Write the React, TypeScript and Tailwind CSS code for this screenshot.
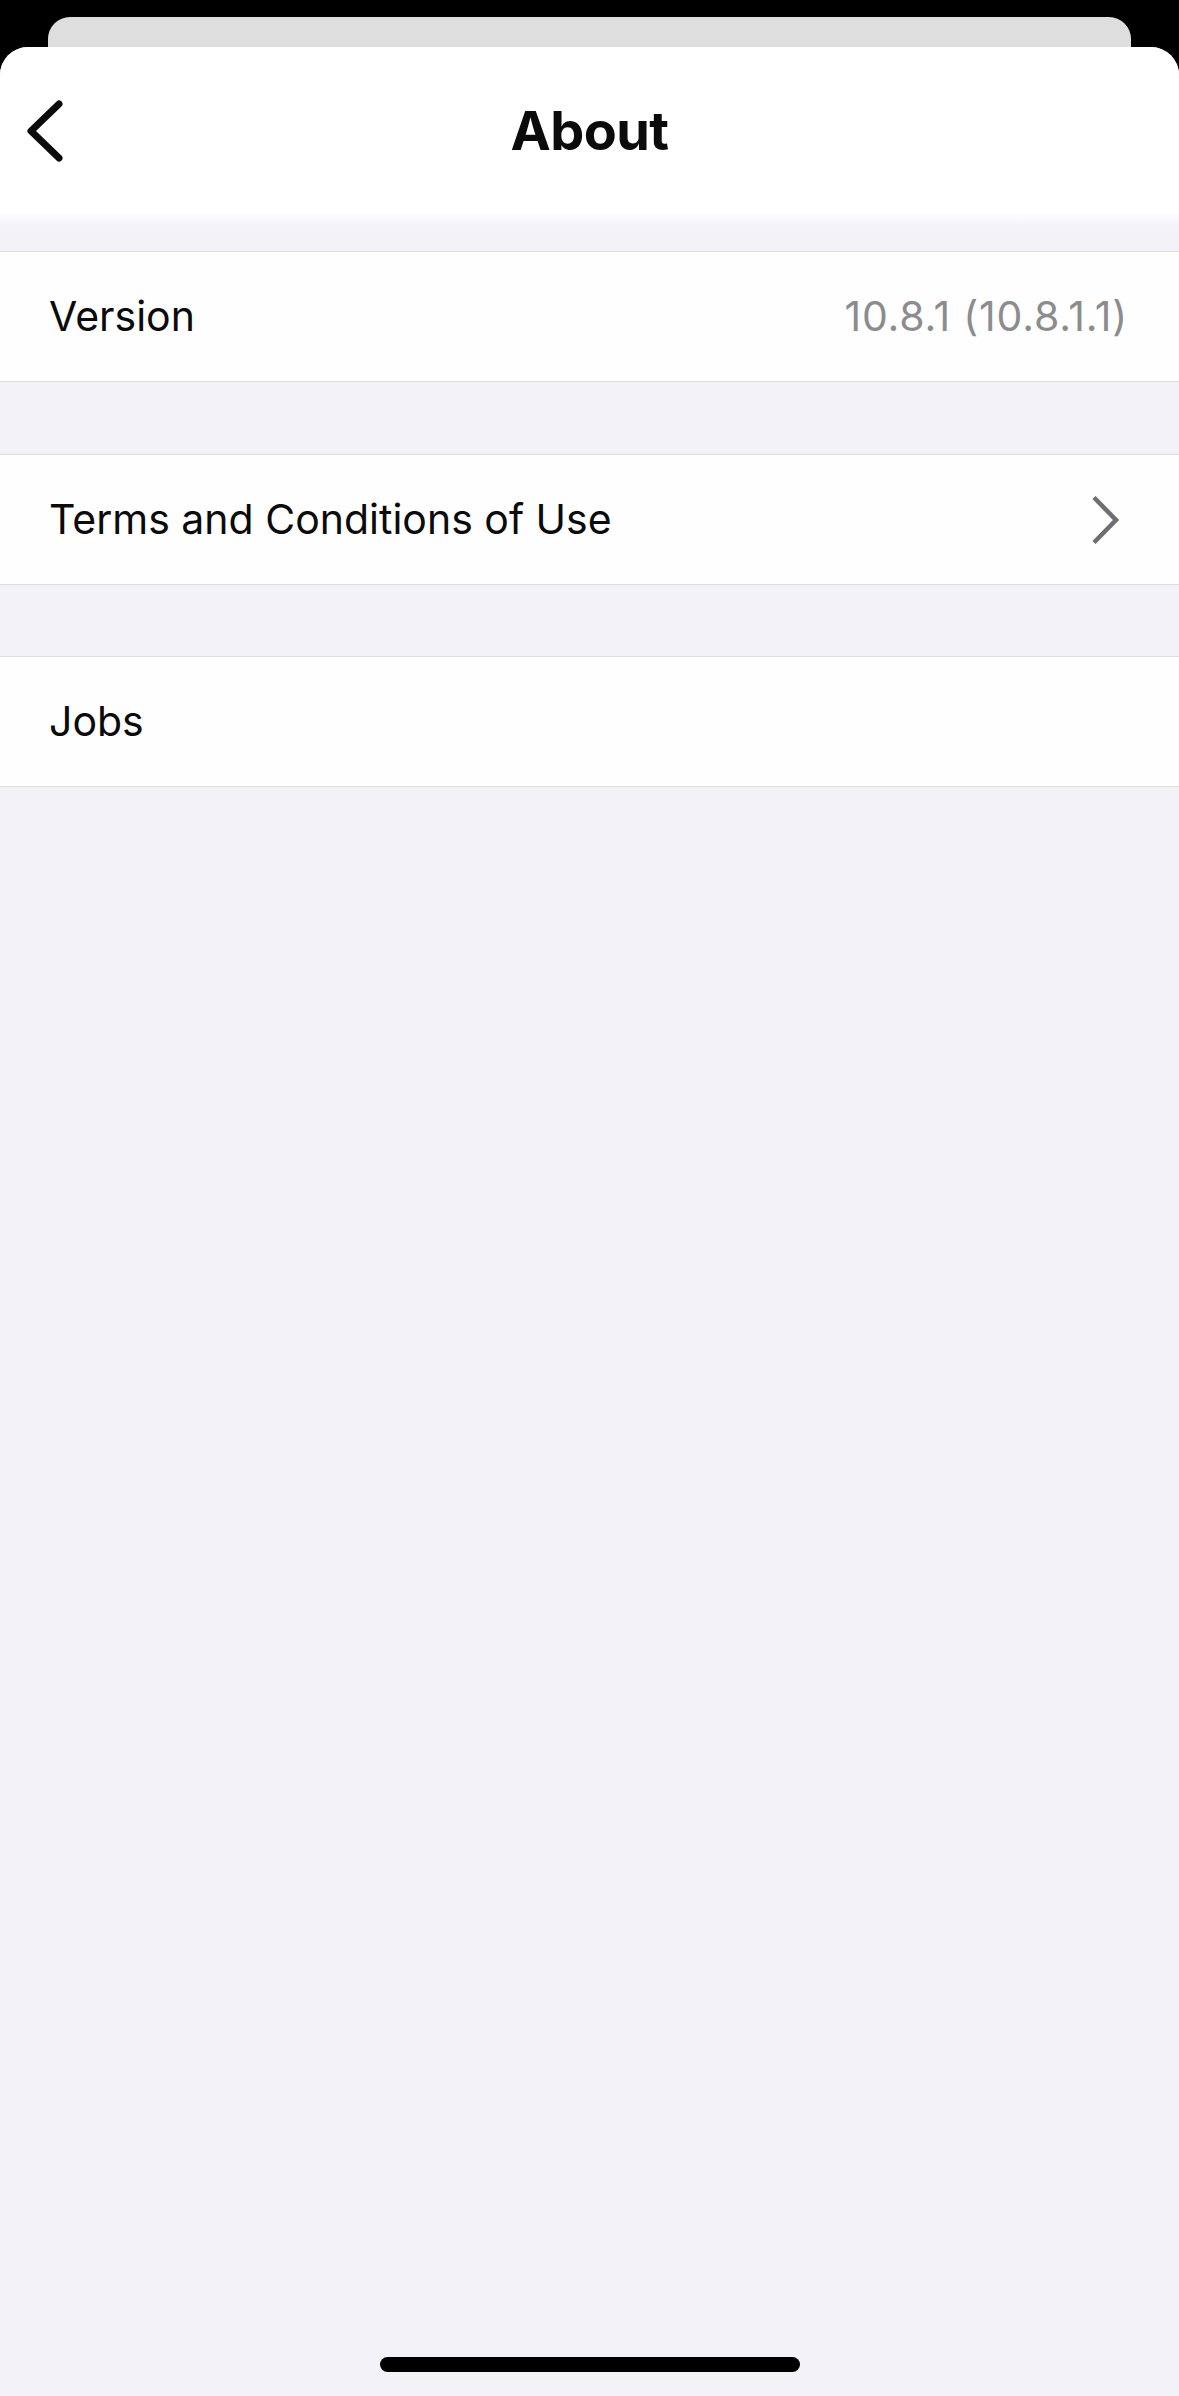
const rowFont = { fontFamily: 'Inter, "Noto Sans", sans-serif' };

function Row({ label, value, chevron }: { label: string; value?: string; chevron?: boolean }) {
  return (
    <div className="flex h-[131px] items-center justify-between border-y border-[#dcdce1] bg-[#fefefe] pl-[49px] pr-[51px]">
      <span className="text-[41px] text-[#0b0b0c]">{label}</span>
      {value && <span className="text-[41px] tracking-[0.8px] text-[#8c8c90]">{value}</span>}
      {chevron && (
        <svg width="30" height="50" viewBox="0 0 30 50" className="mr-[8px]" fill="none">
          <path d="M4 2.5 L26 25 L4 47.5" stroke="#6f6f73" strokeWidth="4.5" />
        </svg>
      )}
    </div>
  );
}

export default function App() {
  return (
    <div className="flex min-h-screen flex-col bg-black pt-[17px]" style={rowFont}>
      <div className="mx-[48px] h-[30px] rounded-t-[22px] bg-[#dedede]" />
      <div className="flex flex-1 flex-col rounded-t-[28px] bg-[#f3f2f7]">
        <div className="relative flex h-[166px] items-center justify-center rounded-t-[28px] bg-white">
          <button className="absolute left-[24px] top-[52px]">
            <svg width="42" height="64" viewBox="0 0 42 64" fill="none">
              <path d="M35 5 L7 32 L35 59" stroke="#0b0b0c" strokeWidth="7" strokeLinecap="round" strokeLinejoin="round" />
            </svg>
          </button>
          <h1 className="text-[54px] font-bold tracking-[-0.6px] text-[#0b0b0c]">About</h1>
        </div>
        <div className="h-[14px] bg-gradient-to-b from-white to-[#f3f2f7]" />
        <div className="h-[24px]" />
        <Row label="Version" value="10.8.1 (10.8.1.1)" />
        <div className="h-[72px]" />
        <Row label="Terms and Conditions of Use" chevron />
        <div className="h-[71px]" />
        <Row label="Jobs" />
        <div className="flex-1" />
        <div className="flex justify-center pb-[24px]">
          <div className="h-[15px] w-[420px] rounded-full bg-black" />
        </div>
      </div>
    </div>
  );
}
